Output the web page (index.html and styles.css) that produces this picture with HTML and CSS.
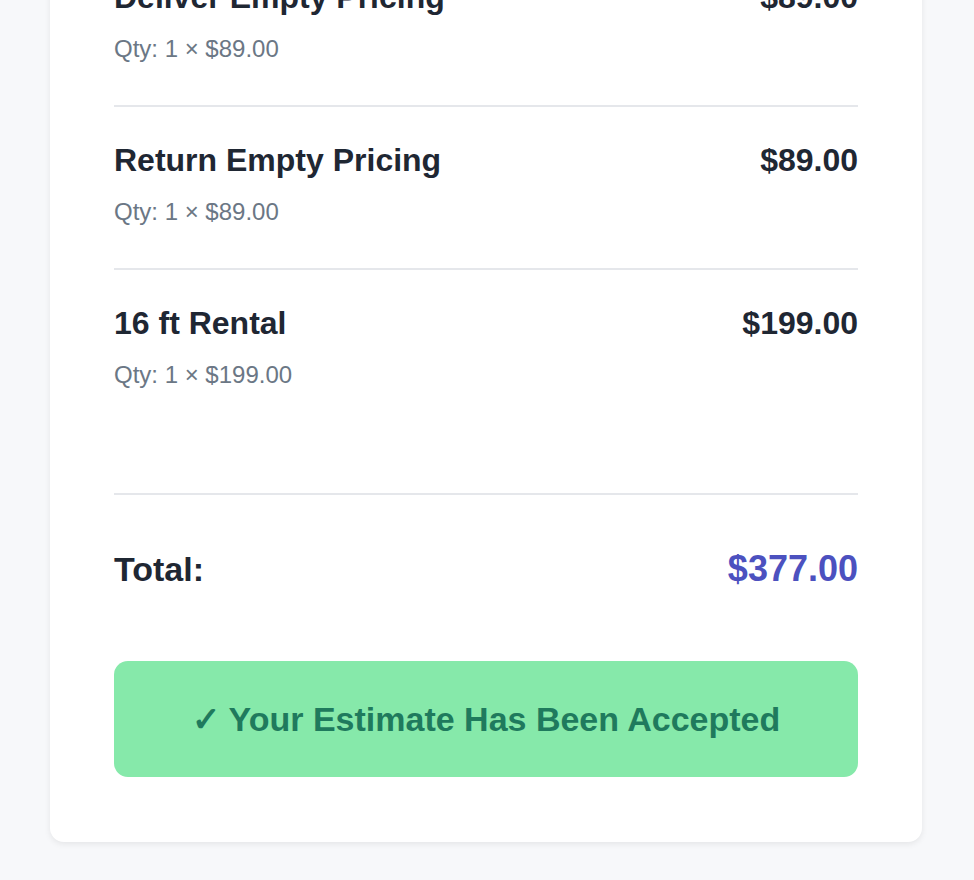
FILE: index.html
```html
<!DOCTYPE html>
<html lang="en">
<head>
    <meta charset="UTF-8">
    <title>Estimate</title>
    <link rel="stylesheet" href="styles.css">
</head>
<body>
    <div class="page">
        <div class="card">
            <div class="items">
                <div class="item">
                    <div class="item-row">
                        <span class="item-name">Deliver Empty Pricing</span>
                        <span class="item-price">$89.00</span>
                    </div>
                    <div class="item-qty">Qty: 1 × $89.00</div>
                </div>
                <div class="item">
                    <div class="item-row">
                        <span class="item-name">Return Empty Pricing</span>
                        <span class="item-price">$89.00</span>
                    </div>
                    <div class="item-qty">Qty: 1 × $89.00</div>
                </div>
                <div class="item">
                    <div class="item-row">
                        <span class="item-name">16 ft Rental</span>
                        <span class="item-price">$199.00</span>
                    </div>
                    <div class="item-qty">Qty: 1 × $199.00</div>
                </div>
            </div>
            <div class="total">
                <span class="total-label">Total:</span>
                <span class="total-amount">$377.00</span>
            </div>
            <div class="accepted">✓ Your Estimate Has Been Accepted</div>
        </div>
    </div>
</body>
</html>
```

FILE: styles.css
```css
body {
    margin: 0;
    font-family: 'Liberation Sans', Arial, sans-serif;
    background-color: #f7f8fa;
    color: #1f2733;
}
.page {
    padding: 0 52px 38px 50px;
}
.card {
    margin-top: -120px;
    background: white;
    padding: 64px 64px 65px;
    border-radius: 14px;
    box-shadow: 0 2px 6px rgba(0,0,0,0.08);
}
.item {
    padding: 32px 0 39px;
    border-bottom: 2px solid #e5e7eb;
}
.item:last-child {
    border-bottom: none;
    padding-bottom: 101px;
}
.item-row {
    display: flex;
    justify-content: space-between;
    align-items: baseline;
}
.item-name, .item-price {
    font-size: 32px;
    font-weight: bold;
    line-height: 42px;
}
.item-qty {
    margin-top: 14px;
    font-size: 24px;
    line-height: 34px;
    color: #6b7785;
}
.total {
    display: flex;
    justify-content: space-between;
    align-items: baseline;
    border-top: 2px solid #e5e7eb;
    padding-top: 50px;
}
.total-label {
    font-size: 34px;
    font-weight: bold;
    line-height: 48px;
}
.total-amount {
    font-size: 36px;
    font-weight: bold;
    line-height: 48px;
    color: #4c51bf;
}
.accepted {
    margin-top: 68px;
    height: 116px;
    display: flex;
    align-items: center;
    justify-content: center;
    background: #86e9aa;
    color: #1f7a5d;
    border-radius: 14px;
    font-size: 34px;
    font-weight: bold;
}
```
